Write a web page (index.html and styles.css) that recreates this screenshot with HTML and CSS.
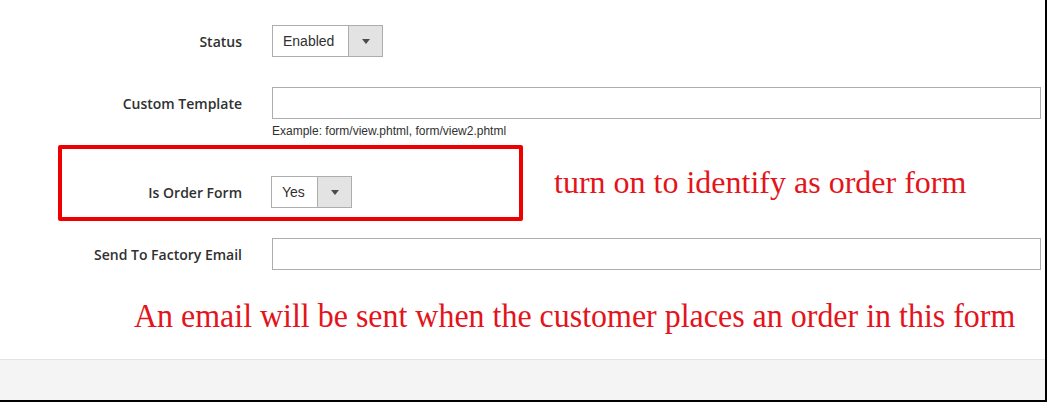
FILE: index.html
```html
<!DOCTYPE html>
<html>
<head>
<meta charset="utf-8">
<link rel="stylesheet" href="styles.css">
</head>
<body>
<div class="frame">
  <div class="main">
    <div class="row">
      <label class="label">Status</label>
      <div class="select select-status">
        <span class="select-value">Enabled</span>
        <span class="select-btn"><span class="caret"></span></span>
      </div>
    </div>
    <div class="row row-custom">
      <label class="label">Custom Template</label>
      <div class="input"></div>
    </div>
    <div class="note">Example: form/view.phtml, form/view2.phtml</div>
    <div class="annot-row">
      <div class="redbox">
        <div class="row row-boxed">
          <label class="label">Is Order Form</label>
          <div class="select select-yes">
            <span class="select-value">Yes</span>
            <span class="select-btn"><span class="caret"></span></span>
          </div>
        </div>
      </div>
      <div class="annot annot-1">turn on to identify as order form</div>
    </div>
    <div class="row row-email">
      <label class="label">Send To Factory Email</label>
      <div class="input"></div>
    </div>
    <div class="annot annot-2"><span class="condensed">An email will be sent when the customer places an order in this form</span></div>
  </div>
  <div class="footer"></div>
</div>
</body>
</html>
```

FILE: styles.css
```css
* { box-sizing: border-box; }
html, body { margin: 0; padding: 0; background: #fff; }
.frame {
  width: 1047px;
  height: 402px;
  border-right: 2px solid #000;
  border-bottom: 2px solid #000;
  display: flex;
  flex-direction: column;
  font-family: "Open Sans", "Liberation Sans", sans-serif;
  color: #303030;
}
.main {
  height: 359px;
  padding-top: 25px;
  background: #fff;
}
.footer {
  flex: 1;
  background: #f4f4f4;
  border-top: 1px solid #e3e3e3;
}
.row {
  display: grid;
  grid-template-columns: 242px 1fr;
  column-gap: 30px;
  align-items: center;
  height: 32px;
}
.label {
  text-align: right;
  font-size: 14px;
  font-weight: 600;
  color: #303030;
}
.row-custom { margin-top: 30px; }
.input {
  width: 769px;
  height: 32px;
  border: 1px solid #adadad;
  background: #fff;
}
.note {
  margin: 5px 0 0 272px;
  font-family: "Liberation Sans", Arial, sans-serif;
  font-size: 12px;
  line-height: 15px;
  color: #303030;
}
.select {
  display: flex;
  height: 32px;
  border: 1px solid #adadad;
  background: #fff;
  font-family: "Liberation Sans", Arial, sans-serif;
  font-size: 14px;
  color: #303030;
}
.select-status { width: 111px; }
.select-yes { width: 81px; margin-left: -1px; }
.select-value {
  flex: 1;
  padding-left: 10px;
  line-height: 31px;
}
.select-btn {
  width: 34px;
  background: #e3e3e3;
  border-left: 1px solid #adadad;
  display: flex;
  align-items: center;
  justify-content: center;
}
.caret {
  width: 0;
  height: 0;
  border-left: 4px solid transparent;
  border-right: 4px solid transparent;
  border-top: 5px solid #514943;
  margin-top: 1px;
}
.annot-row {
  display: flex;
  align-items: center;
  margin-top: 6px;
}
.redbox {
  margin-left: 58px;
  width: 465px;
  height: 76px;
  border: 4px solid #ee0000;
  border-radius: 2px;
  padding-top: 27px;
}
.row-boxed {
  grid-template-columns: 180px 1fr;
  column-gap: 30px;
}
.annot {
  font-family: "Liberation Serif", "Times New Roman", serif;
  color: #e3141b;
}
.annot-1 {
  margin-left: 31px;
  font-size: 32px;
  line-height: 36px;
  margin-top: -2px;
}
.row-email { margin-top: 17px; }
.annot-2 {
  margin-top: 26px;
  padding-left: 134px;
  font-size: 34px;
  line-height: 40px;
  white-space: nowrap;
}
.condensed {
  display: inline-block;
  transform: scaleX(0.94);
  transform-origin: left center;
}
```
